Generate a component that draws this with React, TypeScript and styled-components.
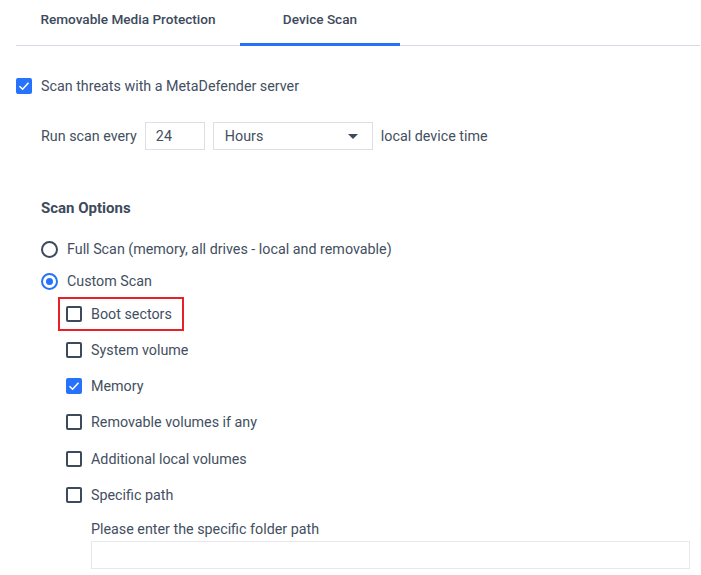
import styled, { createGlobalStyle } from 'styled-components';

const Global = createGlobalStyle`
  body {
    margin: 0;
    background: #ffffff;
    font-family: 'Roboto', 'Liberation Sans', sans-serif;
    color: #434f61;
  }
`

const Page = styled.div`
  width: 701px;
  height: 575px;
  overflow: hidden;
  padding: 0 1px 0 16px;
  box-sizing: border-box;
`

const TabBar = styled.div`
  display: flex;
  height: 46px;
  border-bottom: 1px solid #d6d9e3;
  box-sizing: border-box;
`

const Tab = styled.div<{ width: number; active?: boolean }>`
  width: ${p => p.width}px;
  display: flex;
  align-items: center;
  justify-content: center;
  padding-bottom: 5px;
  box-sizing: border-box;
  font-size: 13.6px;
  font-weight: 500;
  color: #3d4a5c;
  border-bottom: 3px solid ${p => (p.active ? '#2672fb' : 'transparent')};
  margin-bottom: -1px;
`

const Row = styled.div<{ top: number; indent?: number }>`
  display: flex;
  align-items: center;
  gap: 9px;
  margin-top: ${p => p.top}px;
  padding-left: ${p => p.indent ?? 0}px;
  font-size: 14.3px;
  height: 18px;
`

const Box = styled.span<{ checked?: boolean }>`
  width: 16px;
  height: 16px;
  flex: 0 0 16px;
  box-sizing: border-box;
  border-radius: 2px;
  border: 2px solid ${p => (p.checked ? '#2672fb' : '#3d4a5c')};
  background: ${p => (p.checked ? '#2672fb' : '#fff')};
  display: flex;
  align-items: center;
  justify-content: center;
`

const Radio = styled.span<{ checked?: boolean }>`
  width: 17px;
  height: 17px;
  flex: 0 0 17px;
  box-sizing: border-box;
  border-radius: 50%;
  border: 2px solid ${p => (p.checked ? '#2672fb' : '#3d4a5c')};
  display: flex;
  align-items: center;
  justify-content: center;
  &::after {
    content: '';
    display: ${p => (p.checked ? 'block' : 'none')};
    width: 7px;
    height: 7px;
    border-radius: 50%;
    background: #2672fb;
  }
`

const Highlight = styled.div`
  display: flex;
  align-items: center;
  gap: 9px;
  margin-left: -8px;
  padding: 7px 10px 7px 6px;
  border: 2px solid #e8202a;
`

const ScheduleRow = styled.div`
  display: flex;
  align-items: center;
  gap: 8px;
  margin-top: 27px;
  padding-left: 25px;
  font-size: 14.3px;
`

const NumberField = styled.div`
  width: 60px;
  height: 28px;
  box-sizing: border-box;
  border: 1px solid #dcdfe6;
  padding-left: 10px;
  display: flex;
  align-items: center;
`

const SelectField = styled.div`
  width: 160px;
  height: 28px;
  box-sizing: border-box;
  border: 1px solid #dcdfe6;
  padding: 0 14px 0 11px;
  display: flex;
  align-items: center;
  justify-content: space-between;
`

const Caret = styled.span`
  width: 0;
  height: 0;
  border-left: 5px solid transparent;
  border-right: 5px solid transparent;
  border-top: 5px solid #3d4a5c;
`

const Heading = styled.div`
  margin-top: 49px;
  padding-left: 25px;
  font-size: 15px;
  font-weight: 700;
  color: #3d4a5c;
  height: 18px;
  display: flex;
  align-items: center;
`

const PathLabel = styled.div`
  margin-top: 16px;
  padding-left: 75px;
  font-size: 14.3px;
  height: 18px;
  display: flex;
  align-items: center;
`

const PathInput = styled.div`
  margin: 3px 0 0 75px;
  width: 599px;
  height: 28px;
  box-sizing: border-box;
  border: 1px solid #e6e8ee;
`

const Check = () => (
  <svg width="12" height="12" viewBox="0 0 12 12">
    <path d="M1.5 6.2 L4.6 9.2 L10.5 2.8" fill="none" stroke="#fff" strokeWidth="1.6" />
  </svg>
)

const options = [
  { label: 'System volume', checked: false, top: 18 },
  { label: 'Memory', checked: true, top: 18 },
  { label: 'Removable volumes if any', checked: false, top: 18 },
  { label: 'Additional local volumes', checked: false, top: 19 },
  { label: 'Specific path', checked: false, top: 18 },
]

export default function App() {
  return (
    <Page>
      <Global />
      <TabBar>
        <Tab width={224}>Removable Media Protection</Tab>
        <Tab width={160} active>Device Scan</Tab>
      </TabBar>

      <Row top={31}>
        <Box checked><Check /></Box>
        <span>Scan threats with a MetaDefender server</span>
      </Row>

      <ScheduleRow>
        <span>Run scan every</span>
        <NumberField>24</NumberField>
        <SelectField>
          <span>Hours</span>
          <Caret />
        </SelectField>
        <span>local device time</span>
      </ScheduleRow>

      <Heading>Scan Options</Heading>

      <Row top={23} indent={25}>
        <Radio />
        <span>Full Scan (memory, all drives - local and removable)</span>
      </Row>
      <Row top={14} indent={25}>
        <Radio checked />
        <span>Custom Scan</span>
      </Row>

      <Row top={15} indent={50}>
        <Highlight>
          <Box />
          <span>Boot sectors</span>
        </Highlight>
      </Row>

      {options.map(o => (
        <Row key={o.label} top={o.top} indent={50}>
          <Box checked={o.checked}>{o.checked && <Check />}</Box>
          <span>{o.label}</span>
        </Row>
      ))}

      <PathLabel>Please enter the specific folder path</PathLabel>
      <PathInput />
    </Page>
  );
}
